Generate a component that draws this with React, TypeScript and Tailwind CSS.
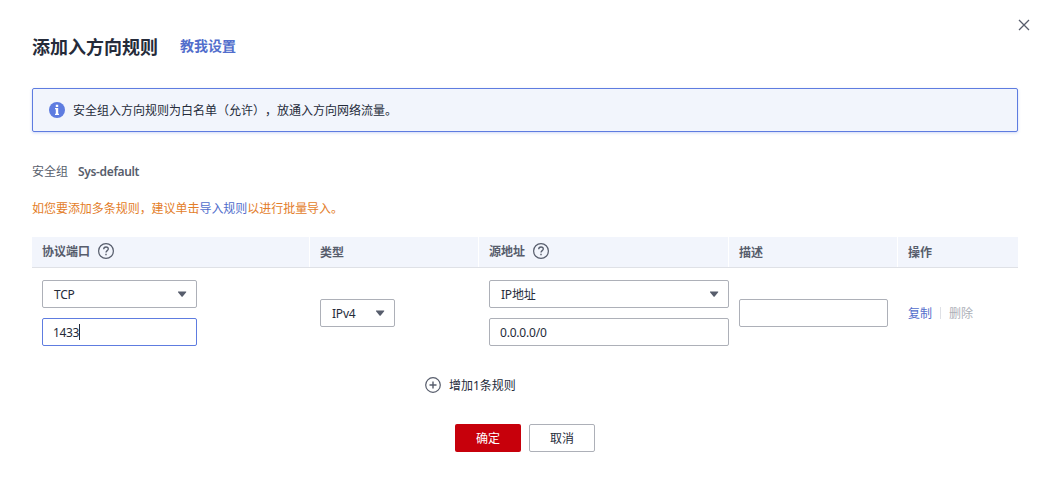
import React from 'react';

const Caret = () => (
  <svg width="10" height="6" viewBox="0 0 10 6" className="shrink-0 fill-[#575d6c]">
    <path d="M1 0.5h8.2v0.8L5.9 5.3a1 1 0 0 1-1.6 0L1 1.3z" />
  </svg>
);

const Help = () => (
  <svg width="16" height="16" viewBox="0 0 16 16" fill="none" stroke="#575d6c" className="shrink-0">
    <circle cx="8" cy="8" r="7.4" strokeWidth="1.2" />
    <path d="M5.7 6.3C5.7 4.8 6.7 4 8 4s2.3.8 2.3 2c0 1.7-2.3 1.6-2.3 3.5" strokeWidth="1.3" />
    <path d="M8 10.8v1.4" strokeWidth="1.4" />
  </svg>
);

function Select({ label, className }: { label: React.ReactNode; className: string }) {
  return (
    <div className={`flex h-7 items-center justify-between rounded-[2px] border border-[#adb0b8] pl-[11px] pr-[9px] ${className}`}>
      <span className="pt-0.5 leading-4 tracking-[-0.2px]">{label}</span>
      <Caret />
    </div>
  );
}

export default function App() {
  return (
    <div className="flex h-[484px] w-[1050px] flex-col bg-white px-8 font-['Noto_Sans','Noto_Sans_CJK_SC',sans-serif] text-xs text-[#252b3a] [text-spacing-trim:space-all]">
      <header className="flex h-[88px] shrink-0 justify-between">
        <div className="flex items-start pt-[33px]">
          <h1 className="pt-px text-[18px] font-bold leading-[26px]">添加入方向规则</h1>
          <a className="ml-[22px] text-sm font-bold leading-[25px] text-[#526ecc]">教我设置</a>
        </div>
        <svg width="12" height="12" viewBox="0 0 12 12" className="-mr-3 mt-[19px]" fill="none" stroke="#575d6c" strokeWidth="1.3">
          <path d="M1 1l10 10M11 1L1 11" />
        </svg>
      </header>

      <div className="flex h-11 shrink-0 items-center rounded-[2px] border border-[#5e7ce0] bg-[#f2f5fc] pl-4 shadow-[0_1px_3px_rgba(94,124,224,0.3)]">
        <svg width="16" height="16" viewBox="0 0 16 16" className="shrink-0">
          <circle cx="8" cy="8" r="8" fill="#5e7ce0" />
          <path d="M6.8 2.7h2.4v2.3H6.8zM6 6h3.2v5.8H10V13H6v-1.2h.8V7.2H6z" fill="#fff" />
        </svg>
        <span className="ml-2 pt-0.5 leading-4">安全组入方向规则为白名单（允许），放通入方向网络流量。</span>
      </div>

      <div className="mt-8 flex h-4 shrink-0 items-center text-[#575d6c]">
        <span>安全组</span>
        <span className="ml-[10px] font-semibold tracking-[-0.35px]">Sys-default</span>
      </div>
      <p className="mt-[21px] h-4 shrink-0 leading-4 tracking-[-0.04px] text-[#e37d29]">
        如您要添加多条规则，建议单击<a className="text-[#526ecc]">导入规则</a>以进行批量导入。
      </p>

      <div className="mt-5 grid h-[31px] shrink-0 grid-cols-[278px_169px_250px_169px_120px] border-b border-[#dfe1e6] bg-[#f2f5fc] font-bold text-[#575d6c]">
        <div className="flex items-center gap-2 border-r border-white pl-[10px] pb-[2px]"><span className="pt-0.5">协议端口</span><Help /></div>
        <div className="flex items-center border-r border-white pl-[10px] pt-0.5">类型</div>
        <div className="flex items-center gap-2 border-r border-white pl-[10px] pb-[2px]"><span className="pt-0.5">源地址</span><Help /></div>
        <div className="flex items-center border-r border-white pl-[10px] pt-0.5">描述</div>
        <div className="flex items-center pl-[10px] pt-0.5">操作</div>
      </div>

      <div className="grid h-[90px] shrink-0 grid-cols-[278px_169px_250px_169px_120px] items-center">
        <div className="flex flex-col gap-[10px] pl-[10px]">
          <Select label="TCP" className="w-[155px]" />
          <div className="flex h-7 w-[155px] items-center rounded-[2px] border border-[#5e7ce0] pl-[10px]">
            <span className="pt-0.5 tracking-[-0.4px]">1433</span>
            <span className="h-4 w-px bg-[#252b3a]" />
          </div>
        </div>
        <div className="pl-[10px]"><Select label="IPv4" className="w-[75px]" /></div>
        <div className="flex flex-col gap-[10px] pl-[10px]">
          <Select label="IP地址" className="w-60" />
          <div className="flex h-7 w-60 items-center rounded-[2px] border border-[#adb0b8] pl-[10px] pt-0.5 tracking-[-0.2px]">0.0.0.0/0</div>
        </div>
        <div className="pl-[10px]"><div className="h-7 w-[149px] rounded-[2px] border border-[#adb0b8]" /></div>
        <div className="flex items-center pl-[10px]">
          <a className="pt-0.5 text-[#526ecc]">复制</a>
          <span className="mx-2 h-3 w-px bg-[#dfe1e6]" />
          <span className="pt-0.5 text-[#adb0b8]">删除</span>
        </div>
      </div>

      <div className="mt-[19px] flex h-4 shrink-0 items-center gap-2 pl-[393px]">
        <svg width="16" height="16" viewBox="0 0 16 16" fill="none" stroke="#575d6c" strokeWidth="1.2">
          <circle cx="8" cy="8" r="7.3" />
          <path d="M8 4.5v7M4.5 8h7" strokeWidth="1.4" />
        </svg>
        <span className="pt-0.5">增加1条规则</span>
      </div>

      <div className="mt-[31px] flex shrink-0 justify-center gap-2">
        <button className="h-7 w-[66px] rounded-[2px] bg-[#c7000b] pt-0.5 text-white">确定</button>
        <button className="h-7 w-[66px] rounded-[2px] border border-[#adb0b8] pt-0.5">取消</button>
      </div>
    </div>
  );
}
